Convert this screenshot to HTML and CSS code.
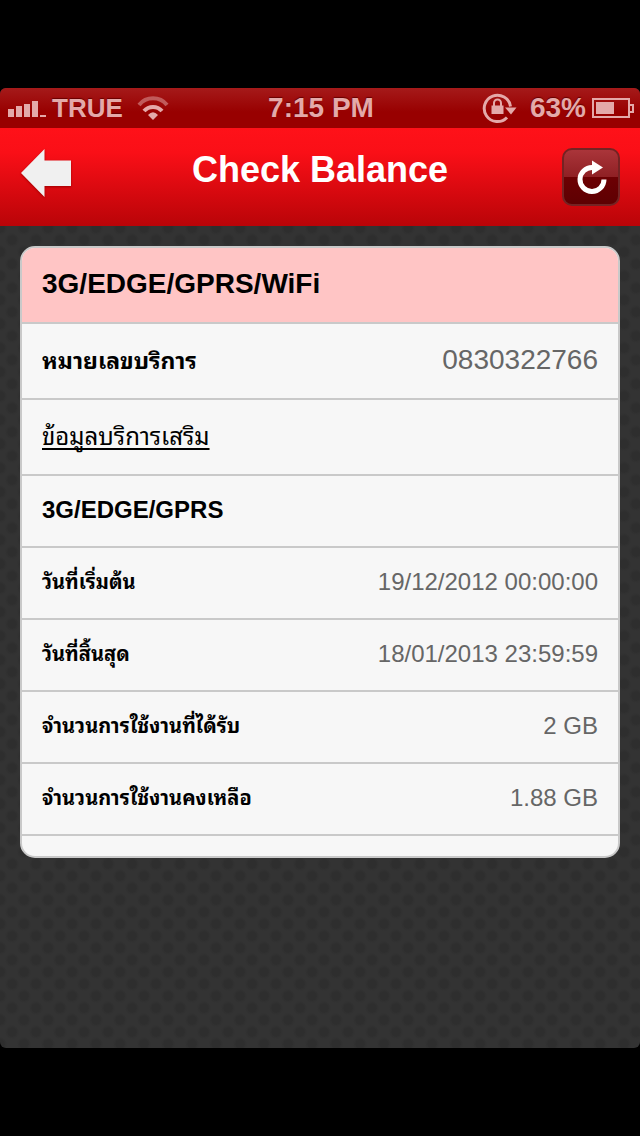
FILE: index.html
```html
<!DOCTYPE html>
<html lang="th">
<head>
<meta charset="utf-8">
<meta name="viewport" content="width=device-width, initial-scale=1">
<title>Check Balance</title>
<link rel="stylesheet" href="styles.css">
</head>
<body>
<div class="screen">
  <div class="status">
    <div class="status-side">
      <svg class="signal" width="38" height="18" viewBox="0 0 38 18" aria-hidden="true"><path d="M0 10h6v8H0zM8 7h6v11H8zM16 5h6v13h-6zM24 2h6v16h-6zM32 16h6v2h-6z"/></svg>
      <span class="carrier">TRUE</span>
      <svg class="wifi" width="32" height="24" viewBox="0 0 32 24" aria-hidden="true">
        <path class="arc faint" d="M2 9A18 18 0 0 1 30 9"/>
        <path class="arc" d="M7 15A12 12 0 0 1 25 15"/>
        <path d="M11 19Q16 13.500 21 19L16 24z"/>
      </svg>
    </div>
    <span>7:15 PM</span>
    <div class="status-side status-end">
      <svg class="lock" width="34" height="30" viewBox="0 0 34 30" aria-hidden="true">
        <path class="ring" d="M28.500 13.500A13.200 13.200 0 1 0 25 24.500"/>
        <path d="M23 14.500h11.500l-5.500 7z"/>
        <path d="M9.500 12.500h12v8.500H9.500z"/>
        <path class="shackle" d="M12 13v-3a3.500 3.500 0 0 1 7 0v3"/>
      </svg>
      <span>63%</span>
      <svg class="battery" width="42" height="20" viewBox="0 0 42 20" aria-hidden="true">
        <path class="case" d="M1 1h36v18H1zM38 7h3v7h-3"/>
        <path d="M4 4h18v12H4z"/>
      </svg>
    </div>
  </div>
  <header class="bar">
    <button class="back" type="button" aria-label="Back">
      <svg width="52" height="50" viewBox="0 0 52 50" aria-hidden="true"><path d="M1 25 24.500 1V12.500H51V38H24.500V49z"/></svg>
    </button>
    <h1 class="title">Check Balance</h1>
    <button class="refresh" type="button" aria-label="Refresh">
      <svg width="32" height="36" viewBox="0 0 32 36" aria-hidden="true"><path class="loop" d="M17.500 8.500A12 12 0 1 0 29 20.500"/><path class="tip" d="M17 1.500 28 8.500 17 15.500z"/></svg>
    </button>
  </header>
  <main class="content">
    <div class="card">
      <table class="details">
        <tbody>
          <tr class="heading"><th colspan="2" scope="colgroup">3G/EDGE/GPRS/WiFi</th></tr>
          <tr class="main"><th scope="row">หมายเลขบริการ</th><td>0830322766</td></tr>
          <tr class="main"><td class="extra" colspan="2"><a href="#extra">ข้อมูลบริการเสริม</a></td></tr>
          <tr class="section"><th colspan="2" scope="colgroup">3G/EDGE/GPRS</th></tr>
          <tr><th scope="row">วันที่เริ่มต้น</th><td>19/12/2012 00:00:00</td></tr>
          <tr><th scope="row">วันที่สิ้นสุด</th><td>18/01/2013 23:59:59</td></tr>
          <tr><th scope="row">จำนวนการใช้งานที่ได้รับ</th><td>2 GB</td></tr>
          <tr><th scope="row">จำนวนการใช้งานคงเหลือ</th><td>1.88 GB</td></tr>
        </tbody>
      </table>
    </div>
  </main>
</div>
</body>
</html>
```
FILE: styles.css
```css
* { box-sizing: border-box; }
body {
  margin: 0;
  min-height: 100vh;
  padding: 88px 0;
  display: flex;
  background: #000;
  font-family: "Liberation Sans", Arial, Thonburi, "Noto Sans Thai Looped", Loma, Garuda, Waree, "Noto Sans Thai", sans-serif;
}
.screen {
  flex: 1;
  display: flex;
  flex-direction: column;
  border-radius: 6px;
  overflow: hidden;
  background-color: #333;
  background-image:
    radial-gradient(circle at 12px 12px, #2e2e2e 4px, transparent 7px),
    radial-gradient(circle at 12px 12px, #2e2e2e 4px, transparent 7px);
  background-size: 24px 24px;
  background-position: 0 20px, 12px 8px;
}
.status {
  height: 40px;
  padding: 0 6px 0 8px;
  display: grid;
  grid-template-columns: 1fr auto 1fr;
  align-items: center;
  background: linear-gradient(#a51a1a, #980000 60%, #980000);
  color: #e4a9a9;
  fill: #e4a9a9;
  font-size: 28px;
  font-weight: bold;
  line-height: 40px;
  text-shadow: 0 -1px 1px #600;
}
.status-side { display: flex; align-items: center; gap: 6px; }
.status-end { justify-content: flex-end; }
.carrier { font-size: 26px; }
.wifi { margin-left: 8px; }
.lock { margin-right: 8px; overflow: visible; }
.arc { fill: none; stroke: #e4a9a9; stroke-width: 4; }
.arc.faint { stroke: #c05a5a; }
.ring, .shackle, .case { fill: none; stroke: #e4a9a9; stroke-width: 2; }
.ring { stroke-width: 3; }
.bar {
  min-height: 98px;
  padding: 0 20px;
  display: grid;
  grid-template-columns: 58px 1fr 58px;
  align-items: center;
  background: linear-gradient(#ff1119, #fa0f17 25%, #b90408);
}
.back, .refresh { padding: 0; border: 0; background: none; display: flex; cursor: pointer; }
.back { margin-bottom: 8px; fill: #f0f0f0; filter: drop-shadow(0 1px 1px #a00000); }
.title {
  margin: 0 0 14px;
  color: #fff;
  font-size: 36px;
  line-height: 44px;
  text-align: center;
}
.refresh {
  width: 58px;
  height: 58px;
  align-items: center;
  justify-content: center;
  border: 2px solid #742323;
  border-radius: 10px;
  background: linear-gradient(#aa353a, #8f2024 50%, #6c0003 50%, #5e0002);
}
.loop { fill: none; stroke: #fff; stroke-width: 5; }
.tip { fill: #fff; }
.content { padding: 20px; }
.card {
  padding-bottom: 20px;
  border: 2px solid #c9c9c9;
  border-radius: 15px;
  overflow: hidden;
  background: #f7f7f7;
}
.details { width: 100%; border-collapse: separate; border-spacing: 0; }
.details th, .details td {
  height: 72px;
  padding: 0 20px 2px;
  border-bottom: 2px solid #c9c9c9;
  font-size: 24px;
  line-height: 28px;
}
.details th { text-align: left; font-size: 20px; color: #000; }
.details td { text-align: right; color: #666; }
.details .heading th { height: 76px; font-size: 28px; background: #ffc5c5; }
.details .main th, .details .main td { height: 76px; }
.details .main th { padding-top: 2px; font-size: 23px; }
.details .main td { font-size: 28px; }
.details .section th { font-size: 24px; }
.details .main .extra { padding-top: 2px; text-align: left; font-size: 24px; }
.extra a { color: #000; text-decoration-thickness: 2px; text-underline-offset: 3px; text-decoration-skip-ink: none; }
```
